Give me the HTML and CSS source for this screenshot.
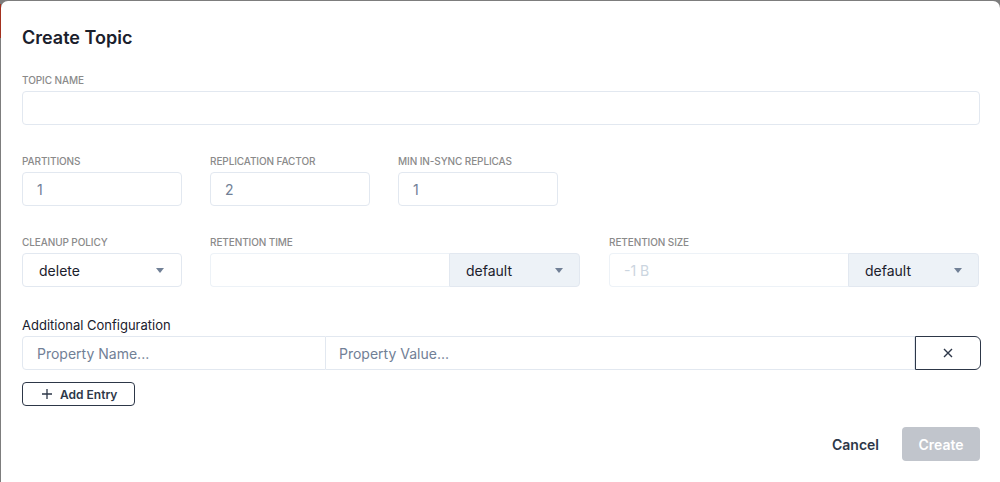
FILE: index.html
```html
<!DOCTYPE html>
<html>
<head>
<meta charset="utf-8">
<link rel="stylesheet" href="styles.css">
</head>
<body>
<div class="modal">
  <h1 class="title">Create Topic</h1>

  <div class="field">
    <label class="label">Topic Name</label>
    <div class="input"></div>
  </div>

  <div class="row">
    <div class="field w160">
      <label class="label">Partitions</label>
      <div class="input"><span class="val">1</span></div>
    </div>
    <div class="field w160">
      <label class="label">Replication Factor</label>
      <div class="input"><span class="val">2</span></div>
    </div>
    <div class="field w160">
      <label class="label">Min In-Sync Replicas</label>
      <div class="input"><span class="val">1</span></div>
    </div>
  </div>

  <div class="row">
    <div class="field w160">
      <label class="label">Cleanup Policy</label>
      <div class="select"><span>delete</span><svg class="caret" viewBox="0 0 8 5"><path d="M0 0H8L4 5Z"/></svg></div>
    </div>
    <div class="field w370">
      <label class="label">Retention Time</label>
      <div class="group">
        <div class="gin"></div>
        <div class="gsel"><span>default</span><svg class="caret" viewBox="0 0 8 5"><path d="M0 0H8L4 5Z"/></svg></div>
      </div>
    </div>
    <div class="field w370">
      <label class="label">Retention Size</label>
      <div class="group">
        <div class="gin"><span class="ph">-1 B</span></div>
        <div class="gsel"><span>default</span><svg class="caret" viewBox="0 0 8 5"><path d="M0 0H8L4 5Z"/></svg></div>
      </div>
    </div>
  </div>

  <div class="addl">
    <div class="addl-label">Additional Configuration</div>
    <div class="kv">
      <div class="kv-name">Property Name...</div>
      <div class="kv-value">Property Value...</div>
      <div class="kv-del"><svg viewBox="0 0 10 10"><path d="M1 1L9 9M9 1L1 9"/></svg></div>
    </div>
    <div class="add-btn"><svg viewBox="0 0 10 10"><path d="M5 0V10M0 5H10"/></svg><span>Add Entry</span></div>
  </div>

  <div class="footer">
    <span class="cancel">Cancel</span>
    <span class="create">Create</span>
  </div>
</div>
</body>
</html>
```

FILE: styles.css
```css
html, body {
  margin: 0;
  padding: 0;
}
body {
  width: 1000px;
  height: 482px;
  overflow: hidden;
  background: linear-gradient(#a3311f, #a3311f) 0 4px / 1px 34px no-repeat, #7d7d7d;
  font-family: Inter, "Noto Sans", sans-serif;
}
.modal {
  margin: 1px 0 0 1px;
  width: 999px;
  height: 481px;
  box-sizing: border-box;
  background: #fff;
  border-radius: 7px 7px 0 0;
  padding: 25px 20px 0 21px;
  display: flex;
  flex-direction: column;
}
.title {
  margin: 0;
  font-size: 18px;
  line-height: 24px;
  font-weight: 600;
  color: #1a202c;
}
.field {
  display: flex;
  flex-direction: column;
}
.modal > .field {
  margin-top: 24px;
}
.label {
  font-size: 10px;
  line-height: 13px;
  font-weight: 500;
  text-transform: uppercase;
  color: #8a8a8a;
  margin-bottom: 4px;
  letter-spacing: -0.1px;
}
.input {
  height: 34px;
  box-sizing: border-box;
  border: 1px solid #e2e8f0;
  border-radius: 4px;
  display: flex;
  align-items: center;
  padding: 0 14px;
  font-size: 14px;
  color: #718096;
}
.row {
  display: flex;
  gap: 28px;
  margin-top: 30px;
}
.w160 { width: 160px; }
.w370 { width: 370px; }
.w370 + .w370 { margin-left: 1px; }
.select {
  height: 34px;
  box-sizing: border-box;
  border: 1px solid #e2e8f0;
  border-radius: 4px;
  display: flex;
  align-items: center;
  justify-content: space-between;
  padding: 0 17px 0 16px;
  font-size: 14px;
  color: #1a202c;
}
.caret {
  width: 8px;
  height: 5px;
  fill: #718096;
}
.group {
  height: 34px;
  display: flex;
}
.gin {
  flex: 1;
  box-sizing: border-box;
  border: 1px solid #edf2f7;
  border-right: none;
  border-radius: 4px 0 0 4px;
  display: flex;
  align-items: center;
  padding: 0 14px;
  font-size: 14px;
}
.ph { color: #cbd5e0; }
.gsel {
  width: 131px;
  box-sizing: border-box;
  background: #edf2f7;
  border: 1px solid #e2e8f0;
  border-radius: 0 4px 4px 0;
  display: flex;
  align-items: center;
  justify-content: space-between;
  padding: 0 16px 0 16px;
  font-size: 14px;
  color: #1a202c;
}
.addl {
  margin-top: 30px;
  display: flex;
  flex-direction: column;
  align-items: flex-start;
}
.addl-label {
  font-size: 13px;
  line-height: 16px;
  color: #1a202c;
  margin-bottom: 3px;
}
.kv {
  align-self: stretch;
  display: flex;
  height: 34px;
  margin-right: -1px;
}
.kv-name, .kv-value {
  box-sizing: border-box;
  border: 1px solid #e2e8f0;
  display: flex;
  align-items: center;
  font-size: 14px;
  color: #718096;
}
.kv-name {
  width: 304px;
  border-radius: 4px 0 0 4px;
  padding: 0 14px;
}
.kv-value {
  flex: 1;
  border-left: none;
  padding: 0 13px;
}
.kv-del {
  width: 66px;
  box-sizing: border-box;
  border: 1px solid #2d3748;
  border-radius: 0 6px 6px 0;
  display: flex;
  align-items: center;
  justify-content: center;
}
.kv-del svg {
  width: 10px;
  height: 10px;
  stroke: #2d3748;
  stroke-width: 1.4;
  fill: none;
}
.add-btn {
  margin-top: 12px;
  height: 24px;
  width: 113px;
  box-sizing: border-box;
  border: 1px solid #2d3748;
  border-radius: 4px;
  display: flex;
  align-items: center;
  padding-left: 19px;
  gap: 8px;
  font-size: 12px;
  font-weight: 600;
  color: #2d3748;
}
.add-btn svg {
  width: 10px;
  height: 10px;
  stroke: #2d3748;
  stroke-width: 1.3;
  fill: none;
}
.footer {
  margin-top: 21px;
  display: flex;
  justify-content: flex-end;
  align-items: center;
  gap: 23px;
}
.cancel {
  font-size: 14px;
  font-weight: 600;
  color: #2d3748;
}
.create {
  width: 78px;
  height: 34px;
  box-sizing: border-box;
  border-radius: 4px;
  background: #c1c5cc;
  color: #fff;
  font-size: 14px;
  font-weight: 600;
  display: flex;
  align-items: center;
  justify-content: center;
}
```
